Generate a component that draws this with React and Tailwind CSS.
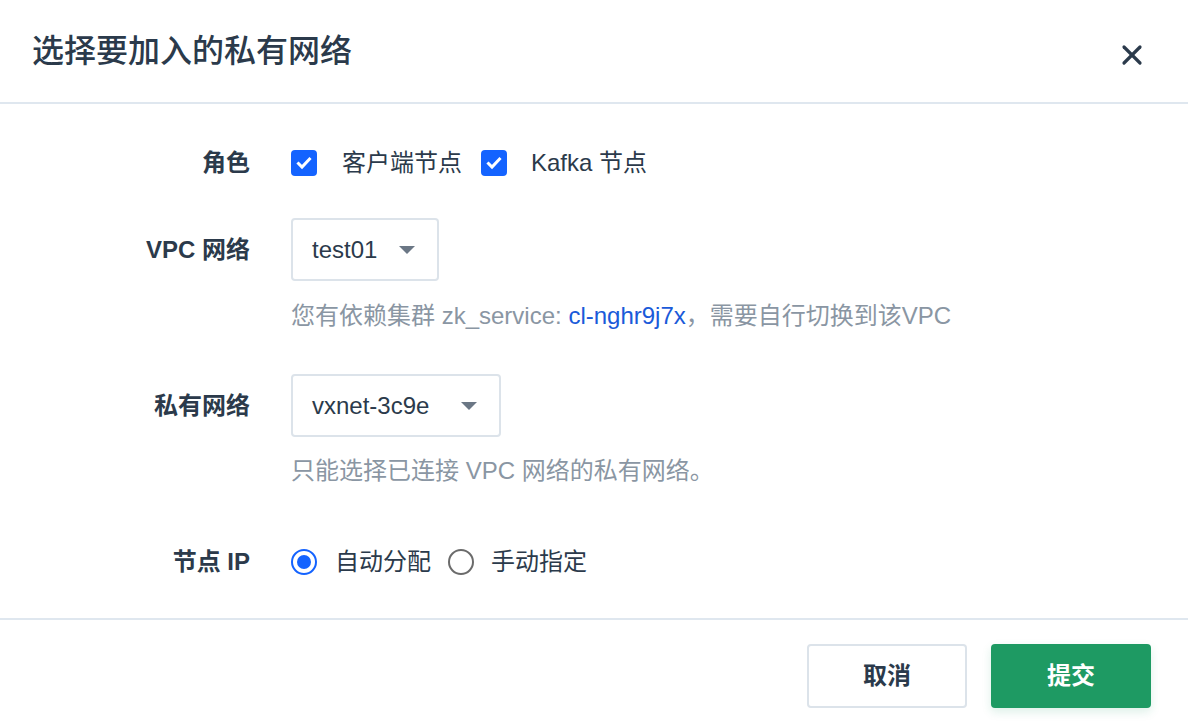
import { X } from 'lucide-react';

const font = { fontFamily: '"Liberation Sans", "Noto Sans CJK SC", sans-serif' };

function Checkbox() {
    return (
        <span className="w-[26px] h-[26px] rounded-[4px] bg-[#1463ff] flex items-center justify-center shrink-0">
            <svg width="18" height="18" viewBox="0 0 18 18" fill="none">
                <path d="M3.5 9.5l3.5 3.5 7.5-8" stroke="#fff" strokeWidth="3" strokeLinecap="square" />
            </svg>
        </span>
    );
}

function Radio({ checked }) {
    if (checked) {
        return (
            <span className="w-[26px] h-[26px] rounded-full border-[2.5px] border-[#1463ff] flex items-center justify-center shrink-0">
                <span className="w-[14px] h-[14px] rounded-full bg-[#1463ff]" />
            </span>
        );
    }
    return <span className="block w-[26px] h-[26px] rounded-full border-2 border-[#6b6b6b] shrink-0" />;
}

function Select({ value, width }) {
    return (
        <div className={`h-[63px] ${width} border-2 border-[#dce3ea] rounded-[4px] flex items-center justify-between pl-[19px] pr-[22px] text-[24px] text-[#2b3a4b]`}>
            <span>{value}</span>
            <svg width="16" height="8" viewBox="0 0 16 8">
                <path d="M0 0h16L8 8z" fill="#6b7785" />
            </svg>
        </div>
    );
}

function Label({ children }) {
    return (
        <div className="w-[250px] shrink-0 text-right text-[24px] font-bold text-[#2b3a4b]">{children}</div>
    );
}

export default function App() {
    return (
        <div className="h-[726px] w-[1188px] bg-white flex flex-col" style={font}>
            <header className="h-[104px] border-b-2 border-[#dfe7ef] flex items-center justify-between pl-[32px] pr-[32px] shrink-0">
                <h1 className="text-[32px] text-[#2b3a4b] font-medium">选择要加入的私有网络</h1>
                <X className="w-[32px] h-[32px] text-[#2b3a4b] mr-[8px] mt-[8px]" strokeWidth={2.4} />
            </header>

            <main className="flex-1 pt-[39px]">
                <div className="flex items-center h-[40px]">
                    <Label>角色</Label>
                    <div className="ml-[41px] flex items-center text-[24px] text-[#2b3a4b]">
                        <Checkbox />
                        <span className="ml-[25px]">客户端节点</span>
                        <span className="ml-[19px]"><Checkbox /></span>
                        <span className="ml-[24px]">Kafka 节点</span>
                    </div>
                </div>

                <div className="flex items-center mt-[35px]">
                    <Label>VPC 网络</Label>
                    <div className="ml-[41px]">
                        <Select value="test01" width="w-[148px]" />
                    </div>
                </div>
                <div className="ml-[291px] mt-[20px] h-[30px] leading-[30px] text-[24px] text-[#8a96a3]">
                    您有依赖集群 zk_service: <span className="text-[#1a5ad9]">cl-nghr9j7x</span>，需要自行切换到该VPC
                </div>

                <div className="flex items-center mt-[43px]">
                    <Label>私有网络</Label>
                    <div className="ml-[41px]">
                        <Select value="vxnet-3c9e" width="w-[210px]" />
                    </div>
                </div>
                <div className="ml-[291px] mt-[19px] h-[30px] leading-[30px] text-[24px] text-[#8a96a3]">
                    只能选择已连接 VPC 网络的私有网络。
                </div>

                <div className="flex items-center h-[40px] mt-[56px]">
                    <Label>节点 IP</Label>
                    <div className="ml-[41px] flex items-center text-[24px] text-[#2b3a4b]">
                        <Radio checked />
                        <span className="ml-[18px]">自动分配</span>
                        <span className="ml-[17px]"><Radio /></span>
                        <span className="ml-[17px]">手动指定</span>
                    </div>
                </div>
            </main>

            <footer className="h-[108px] border-t-2 border-[#dfe7ef] flex items-start justify-end gap-[24px] pt-[24px] pr-[37px] shrink-0">
                <button className="w-[160px] h-[64px] rounded-[4px] border-2 border-[#dce3ea] bg-white text-[24px] font-bold text-[#2b3a4b]">取消</button>
                <button className="w-[160px] h-[64px] rounded-[4px] bg-[#1e9a63] text-[24px] font-bold text-white shadow-[0_4px_10px_rgba(30,154,99,0.15)]">提交</button>
            </footer>
        </div>
    );
}
